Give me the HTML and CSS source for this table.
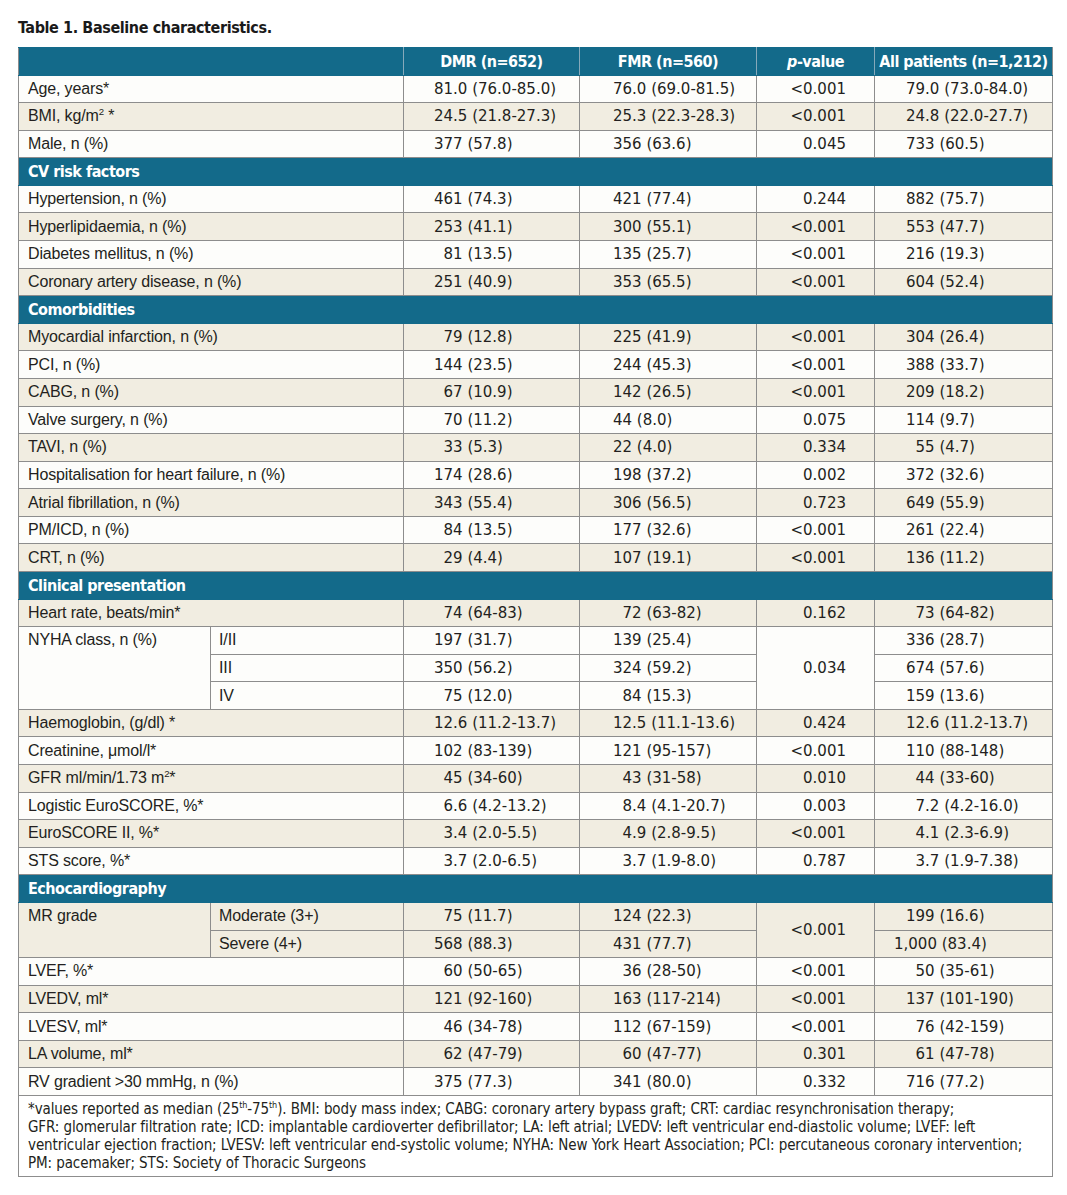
FILE: index.html
```html
<!DOCTYPE html>
<html lang="en">
<head>
<meta charset="utf-8">
<title>Table 1. Baseline characteristics.</title>
<link rel="stylesheet" href="styles.css">
</head>
<body>
<div class="page">
<h1 class="title">Table 1. Baseline characteristics.</h1>
<table class="tbl">
<colgroup><col class="c-lab"><col class="c-sub"><col class="c-dmr"><col class="c-fmr"><col class="c-p"><col class="c-all"></colgroup>
<thead>
<tr class="head"><th colspan="2"></th><th>DMR (n=652)</th><th>FMR (n=560)</th><th><i>p</i>-value</th><th>All patients (n=1,212)</th></tr>
</thead>
<tbody>
<tr class="w"><td colspan="2" class="lab">Age, years*</td><td class="d">81.0 (76.0-85.0)</td><td class="f">76.0 (69.0-81.5)</td><td class="p">&lt;0.001</td><td class="a">79.0 (73.0-84.0)</td></tr>
<tr class="b"><td colspan="2" class="lab">BMI, kg/m<sup>2</sup> *</td><td class="d">24.5 (21.8-27.3)</td><td class="f">25.3 (22.3-28.3)</td><td class="p">&lt;0.001</td><td class="a">24.8 (22.0-27.7)</td></tr>
<tr class="w"><td colspan="2" class="lab">Male, n (%)</td><td class="d">377 (57.8)</td><td class="f">356 (63.6)</td><td class="p">0.045</td><td class="a">733 (60.5)</td></tr>
<tr class="sec"><td colspan="6">CV risk factors</td></tr>
<tr class="w"><td colspan="2" class="lab">Hypertension, n (%)</td><td class="d">461 (74.3)</td><td class="f">421 (77.4)</td><td class="p">0.244</td><td class="a">882 (75.7)</td></tr>
<tr class="b"><td colspan="2" class="lab">Hyperlipidaemia, n (%)</td><td class="d">253 (41.1)</td><td class="f">300 (55.1)</td><td class="p">&lt;0.001</td><td class="a">553 (47.7)</td></tr>
<tr class="w"><td colspan="2" class="lab">Diabetes mellitus, n (%)</td><td class="d">&#8199;81 (13.5)</td><td class="f">135 (25.7)</td><td class="p">&lt;0.001</td><td class="a">216 (19.3)</td></tr>
<tr class="b"><td colspan="2" class="lab">Coronary artery disease, n (%)</td><td class="d">251 (40.9)</td><td class="f">353 (65.5)</td><td class="p">&lt;0.001</td><td class="a">604 (52.4)</td></tr>
<tr class="sec"><td colspan="6">Comorbidities</td></tr>
<tr class="b"><td colspan="2" class="lab">Myocardial infarction, n (%)</td><td class="d">&#8199;79 (12.8)</td><td class="f">225 (41.9)</td><td class="p">&lt;0.001</td><td class="a">304 (26.4)</td></tr>
<tr class="w"><td colspan="2" class="lab">PCI, n (%)</td><td class="d">144 (23.5)</td><td class="f">244 (45.3)</td><td class="p">&lt;0.001</td><td class="a">388 (33.7)</td></tr>
<tr class="b"><td colspan="2" class="lab">CABG, n (%)</td><td class="d">&#8199;67 (10.9)</td><td class="f">142 (26.5)</td><td class="p">&lt;0.001</td><td class="a">209 (18.2)</td></tr>
<tr class="w"><td colspan="2" class="lab">Valve surgery, n (%)</td><td class="d">&#8199;70 (11.2)</td><td class="f">44 (8.0)</td><td class="p">0.075</td><td class="a">114 (9.7)</td></tr>
<tr class="b"><td colspan="2" class="lab">TAVI, n (%)</td><td class="d">&#8199;33 (5.3)</td><td class="f">22 (4.0)</td><td class="p">0.334</td><td class="a">&#8199;55 (4.7)</td></tr>
<tr class="w"><td colspan="2" class="lab">Hospitalisation for heart failure, n (%)</td><td class="d">174 (28.6)</td><td class="f">198 (37.2)</td><td class="p">0.002</td><td class="a">372 (32.6)</td></tr>
<tr class="b"><td colspan="2" class="lab">Atrial fibrillation, n (%)</td><td class="d">343 (55.4)</td><td class="f">306 (56.5)</td><td class="p">0.723</td><td class="a">649 (55.9)</td></tr>
<tr class="w"><td colspan="2" class="lab">PM/ICD, n (%)</td><td class="d">&#8199;84 (13.5)</td><td class="f">177 (32.6)</td><td class="p">&lt;0.001</td><td class="a">261 (22.4)</td></tr>
<tr class="b"><td colspan="2" class="lab">CRT, n (%)</td><td class="d">&#8199;29 (4.4)</td><td class="f">107 (19.1)</td><td class="p">&lt;0.001</td><td class="a">136 (11.2)</td></tr>
<tr class="sec"><td colspan="6">Clinical presentation</td></tr>
<tr class="b"><td colspan="2" class="lab">Heart rate, beats/min*</td><td class="d">&#8199;74 (64-83)</td><td class="f">&#8199;72 (63-82)</td><td class="p">0.162</td><td class="a">&#8199;73 (64-82)</td></tr>
<tr class="w"><td rowspan="3" class="lab top">NYHA class, n (%)</td><td class="sub">I/II</td><td class="d">197 (31.7)</td><td class="f">139 (25.4)</td><td rowspan="3" class="p">0.034</td><td class="a">336 (28.7)</td></tr>
<tr class="w"><td class="sub">III</td><td class="d">350 (56.2)</td><td class="f">324 (59.2)</td><td class="a">674 (57.6)</td></tr>
<tr class="w"><td class="sub">IV</td><td class="d">&#8199;75 (12.0)</td><td class="f">&#8199;84 (15.3)</td><td class="a">159 (13.6)</td></tr>
<tr class="b"><td colspan="2" class="lab">Haemoglobin, (g/dl) *</td><td class="d">12.6 (11.2-13.7)</td><td class="f">12.5 (11.1-13.6)</td><td class="p">0.424</td><td class="a">12.6 (11.2-13.7)</td></tr>
<tr class="w"><td colspan="2" class="lab">Creatinine, μmol/l*</td><td class="d">102 (83-139)</td><td class="f">121 (95-157)</td><td class="p">&lt;0.001</td><td class="a">110 (88-148)</td></tr>
<tr class="b"><td colspan="2" class="lab">GFR ml/min/1.73 m<sup>2</sup>*</td><td class="d">&#8199;45 (34-60)</td><td class="f">&#8199;43 (31-58)</td><td class="p">0.010</td><td class="a">&#8199;44 (33-60)</td></tr>
<tr class="w"><td colspan="2" class="lab">Logistic EuroSCORE, %*</td><td class="d">&#8199;6.6 (4.2-13.2)</td><td class="f">&#8199;8.4 (4.1-20.7)</td><td class="p">0.003</td><td class="a">&#8199;7.2 (4.2-16.0)</td></tr>
<tr class="b"><td colspan="2" class="lab">EuroSCORE II, %*</td><td class="d">&#8199;3.4 (2.0-5.5)</td><td class="f">&#8199;4.9 (2.8-9.5)</td><td class="p">&lt;0.001</td><td class="a">&#8199;4.1 (2.3-6.9)</td></tr>
<tr class="w"><td colspan="2" class="lab">STS score, %*</td><td class="d">&#8199;3.7 (2.0-6.5)</td><td class="f">&#8199;3.7 (1.9-8.0)</td><td class="p">0.787</td><td class="a">&#8199;3.7 (1.9-7.38)</td></tr>
<tr class="sec"><td colspan="6">Echocardiography</td></tr>
<tr class="b"><td rowspan="2" class="lab top">MR grade</td><td class="sub">Moderate (3+)</td><td class="d">&#8199;75 (11.7)</td><td class="f">124 (22.3)</td><td rowspan="2" class="p">&lt;0.001</td><td class="a">199 (16.6)</td></tr>
<tr class="b"><td class="sub">Severe (4+)</td><td class="d">568 (88.3)</td><td class="f">431 (77.7)</td><td class="a wide">1,000 (83.4)</td></tr>
<tr class="w"><td colspan="2" class="lab">LVEF, %*</td><td class="d">&#8199;60 (50-65)</td><td class="f">&#8199;36 (28-50)</td><td class="p">&lt;0.001</td><td class="a">&#8199;50 (35-61)</td></tr>
<tr class="b"><td colspan="2" class="lab">LVEDV, ml*</td><td class="d">121 (92-160)</td><td class="f">163 (117-214)</td><td class="p">&lt;0.001</td><td class="a">137 (101-190)</td></tr>
<tr class="w"><td colspan="2" class="lab">LVESV, ml*</td><td class="d">&#8199;46 (34-78)</td><td class="f">112 (67-159)</td><td class="p">&lt;0.001</td><td class="a">&#8199;76 (42-159)</td></tr>
<tr class="b"><td colspan="2" class="lab">LA volume, ml*</td><td class="d">&#8199;62 (47-79)</td><td class="f">&#8199;60 (47-77)</td><td class="p">0.301</td><td class="a">&#8199;61 (47-78)</td></tr>
<tr class="w"><td colspan="2" class="lab">RV gradient &gt;30 mmHg, n (%)</td><td class="d">375 (77.3)</td><td class="f">341 (80.0)</td><td class="p">0.332</td><td class="a">716 (77.2)</td></tr>
</tbody>
<tfoot>
<tr class="foot"><td colspan="6">*values reported as median (25<sup>th</sup>-75<sup>th</sup>). BMI: body mass index; CABG: coronary artery bypass graft; CRT: cardiac resynchronisation therapy;<br>GFR: glomerular filtration rate; ICD: implantable cardioverter defibrillator; LA: left atrial; LVEDV: left ventricular end-diastolic volume; LVEF: left<br>ventricular ejection fraction; LVESV: left ventricular end-systolic volume; NYHA: New York Heart Association; PCI: percutaneous coronary intervention;<br>PM: pacemaker; STS: Society of Thoracic Surgeons</td></tr>
</tfoot>
</table>
</div>
</body>
</html>
```

FILE: styles.css
```css
html, body {
  margin: 0;
  padding: 0;
  background: #ffffff;
}

body {
  font-family: "Liberation Sans", Arial, sans-serif;
  color: #231f20;
}

.page {
  padding: 18px 15px 20px 18px;
}

.title {
  font-family: "DejaVu Sans Condensed", "Liberation Sans", sans-serif;
  font-stretch: condensed;
  font-weight: bold;
  font-size: 16px;
  letter-spacing: -0.4px;
  line-height: 20px;
  margin: 0 0 9px 0;
  color: #1a1a1a;
}

.tbl {
  border-collapse: collapse;
  table-layout: fixed;
  width: 1034px;
}

.c-lab { width: 192px; }
.c-sub { width: 193px; }
.c-dmr { width: 176px; }
.c-fmr { width: 177px; }
.c-p { width: 118px; }
.c-all { width: 178px; }

.tbl tbody tr,
.tbl thead tr {
  height: 27.58px;
}

.tbl td,
.tbl th {
  padding: 0;
  border: 1px solid #8d8d8d;
  vertical-align: middle;
  white-space: nowrap;
}

.head th {
  background: #136a8a;
  color: #ffffff;
  font-family: "DejaVu Sans Condensed", "Liberation Sans", sans-serif;
  font-stretch: condensed;
  font-weight: bold;
  font-size: 16px;
  letter-spacing: -0.5px;
  text-align: center;
  border-color: #136a8a;
  border-left-color: #86a9ba;
  border-right-color: #86a9ba;
}

.head th:first-child {
  border-left-color: #8d8d8d;
}

.head th:last-child {
  border-right-color: #8d8d8d;
}

.w td { background: #fdfdfb; }
.b td { background: #f1ede1; }

.sec td {
  background: #136a8a;
  color: #ffffff;
  font-family: "DejaVu Sans Condensed", "Liberation Sans", sans-serif;
  font-stretch: condensed;
  font-weight: bold;
  font-size: 16px;
  letter-spacing: -0.5px;
  padding-left: 9px;
  border-color: #136a8a #8d8d8d;
}

.lab {
  padding-left: 9px !important;
  font-size: 16px;
  letter-spacing: -0.15px;
}

.lab.top {
  vertical-align: top;
  padding-top: 4px !important;
}

.sub {
  padding-left: 8px !important;
  font-size: 16px;
  letter-spacing: -0.1px;
}

.lab sup,
.foot sup {
  font-size: 60%;
  line-height: 0;
}

.d, .f, .a, .p {
  font-family: "DejaVu Sans", sans-serif;
  font-size: 15px;
}

.d { padding-left: 30px !important; }
.f { padding-left: 33px !important; }
.a { padding-left: 31px !important; }
.a.wide { padding-left: 19px !important; }

.p {
  text-align: right;
  padding-right: 28px !important;
}

.foot td {
  background: #ffffff;
  white-space: nowrap;
  font-family: "DejaVu Sans Condensed", "Liberation Sans", sans-serif;
  font-stretch: condensed;
  font-size: 15px;
  letter-spacing: -0.1px;
  line-height: 18px;
  padding: 4px 4px 4px 9px;
  vertical-align: top;
}
```
